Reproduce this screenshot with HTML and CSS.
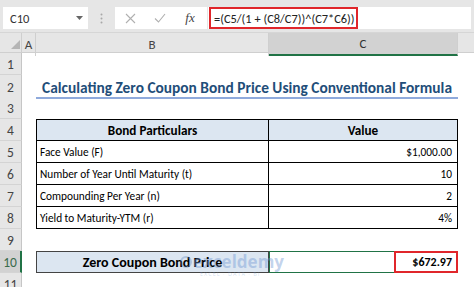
FILE: index.html
```html
<!DOCTYPE html>
<html>
<head>
<meta charset="utf-8">
<link rel="stylesheet" href="styles.css">
</head>
<body>
<div class="app">
  <div class="fbar">
    <div class="namebox"><span>C10</span><svg class="dd" width="7" height="4" viewBox="0 0 7 4"><polygon points="0,0 7,0 3.5,4" fill="#666"/></svg></div>
    <div class="grip"><svg width="3" height="11" viewBox="0 0 3 11"><circle cx="1.5" cy="1.5" r="1" fill="#a8a8a8"/><circle cx="1.5" cy="5.5" r="1" fill="#a8a8a8"/><circle cx="1.5" cy="9.5" r="1" fill="#a8a8a8"/></svg></div>
    <div class="btns">
      <span class="btn"><svg width="11" height="11" viewBox="0 0 11 11"><path d="M1 1 L10 10 M10 1 L1 10" stroke="#b0b0b0" stroke-width="1.1" fill="none"/></svg></span>
      <span class="btn"><svg width="12" height="10" viewBox="0 0 12 10"><path d="M1 5.5 L4.5 9 L11 1" stroke="#b0b0b0" stroke-width="1.1" fill="none"/></svg></span>
      <span class="btn fx">fx</span>
    </div>
    <div class="formula"><div class="fbox">=(C5/(1 + (C8/C7))^(C7*C6))</div></div>
  </div>

  <div class="sheet">
    <div class="row colheads">
      <div class="corner"><svg width="22" height="19" viewBox="0 0 22 19"><polygon points="11,16 20,16 20,7" fill="#b5b5b5"/></svg></div>
      <div class="ch">A</div>
      <div class="ch">B</div>
      <div class="ch sel">C</div>
      <div class="ch last"></div>
    </div>

    <div class="row"><div class="rh">1</div><div></div><div></div><div></div><div></div></div>

    <div class="row"><div class="rh">2</div><div></div><div class="title">Calculating Zero Coupon Bond Price Using Conventional Formula</div><div></div></div>

    <div class="row"><div class="rh">3</div><div></div><div></div><div></div><div></div></div>

    <div class="row"><div class="rh">4</div><div></div><div class="tc tb thead first top">Bond Particulars</div><div class="tc tc2 thead top">Value</div><div></div></div>

    <div class="row"><div class="rh">5</div><div></div><div class="tc tb first">Face Value (F)</div><div class="tc tc2 num">$1,000.00</div><div></div></div>

    <div class="row"><div class="rh">6</div><div></div><div class="tc tb first">Number of Year Until Maturity (t)</div><div class="tc tc2 num">10</div><div></div></div>

    <div class="row"><div class="rh">7</div><div></div><div class="tc tb first">Compounding Per Year (n)</div><div class="tc tc2 num">2</div><div></div></div>

    <div class="row"><div class="rh">8</div><div></div><div class="tc tb first">Yield to Maturity-YTM (r)</div><div class="tc tc2 num">4%</div><div></div></div>

    <div class="row"><div class="rh">9</div><div></div><div></div><div></div><div></div></div>

    <div class="row"><div class="rh selrow">10</div><div></div><div class="result-label">Zero Coupon Bond Price</div><div class="result"><div class="result-box">$672.97</div></div><div></div></div>

    <div class="row"><div class="rh">11</div><div></div><div></div><div></div><div></div></div>

    <div class="watermark">
      <div class="wm-main"><svg class="wm-icon" width="12" height="12" viewBox="0 0 12 12"><circle cx="6" cy="6" r="5" fill="none" stroke="rgba(90,130,190,0.35)" stroke-width="2"/></svg><span>exceldemy</span></div>
      <div class="wm-sub">EXCEL · DATA · BI</div>
    </div>
  </div>
</div>
</body>
</html>
```

FILE: styles.css
```css
html, body {
  margin: 0;
  padding: 0;
  background: #ffffff;
}

.app {
  width: 474px;
  height: 287px;
  overflow: hidden;
  font-family: Carlito, Calibri, Lato, "Noto Sans", sans-serif;
  color: #000;
}

/* ---------- formula bar ---------- */
.fbar {
  height: 33px;
  box-sizing: border-box;
  background: #e6e6e6;
  display: flex;
  align-items: flex-start;
  padding-top: 7px;
  border-bottom: 1px solid #d6d6d6;
}

.namebox {
  margin-left: 3px;
  width: 85px;
  height: 22px;
  box-sizing: border-box;
  background: #fff;
  display: flex;
  align-items: center;
  justify-content: space-between;
  padding: 0 5px 0 7px;
  font-size: 12.5px;
  color: #333;
}

.grip {
  width: 27px;
  height: 22px;
  display: flex;
  align-items: center;
  justify-content: center;
}

.btns {
  width: 92px;
  height: 22px;
  background: #fff;
  display: flex;
  align-items: center;
}

.btn {
  width: 30px;
  display: flex;
  justify-content: center;
  align-items: center;
}

.fx {
  font-family: "Liberation Serif", "DejaVu Serif", serif;
  font-style: italic;
  font-size: 13px;
  color: #444;
}

.formula {
  margin-left: 1px;
  width: 262px;
  height: 22px;
  background: #fff;
  padding-left: 1px;
}

.fbox {
  width: 149px;
  height: 22px;
  box-sizing: border-box;
  border: 2px solid #e0262b;
  display: flex;
  align-items: center;
  padding-left: 3px;
  font-size: 12.4px;
  color: #222;
  white-space: nowrap;
}

/* ---------- sheet ---------- */
.sheet {
  position: relative;
}

.row {
  display: grid;
  grid-template-columns: 22px 14px 233px 189px 1fr;
  height: 22px;
}

.colheads {
  height: 19px;
  background: #e6e6e6;
  border-bottom: 1px solid #cfcfcf;
}

.corner {
  border-right: 1px solid #cfcfcf;
  box-sizing: border-box;
}

.ch {
  font-size: 13px;
  color: #444;
  display: flex;
  align-items: center;
  justify-content: center;
  border-right: 1px solid #cfcfcf;
  box-sizing: border-box;
}

.ch.sel {
  background: #d2d2d2;
  border-bottom: 2px solid #217346;
  color: #333;
}

.ch.last {
  border-right: none;
}

.rh {
  background: #e6e6e6;
  border-right: 1px solid #c6c6c6;
  border-bottom: 1px solid #d4d4d4;
  box-sizing: border-box;
  font-size: 13.5px;
  color: #444;
  display: flex;
  align-items: center;
  justify-content: center;
  padding-top: 2px;
}

.rh.selrow {
  background: #d2d2d2;
  border-right: 2px solid #217346;
  color: #3a6b4c;
}

.title {
  grid-column: 3 / span 2;
  font-weight: bold;
  font-size: 15.4px;
  color: #1f4e79;
  text-align: center;
  border-bottom: 2px solid #8faadc;
  box-sizing: border-box;
  display: flex;
  align-items: center;
  justify-content: center;
  white-space: nowrap;
  padding-top: 3px;
}

/* table cells */
.tc {
  box-sizing: border-box;
  border-bottom: 1px solid #000;
  border-right: 1px solid #000;
  font-size: 11.3px;
  display: flex;
  align-items: center;
  white-space: nowrap;
  padding-top: 1px;
}

.tc.first {
  border-left: 1px solid #000;
  padding-left: 3px;
}

.tc.top {
  border-top: 1px solid #000;
}

.tc.thead {
  background: #dce6f1;
  font-weight: bold;
  justify-content: center;
  padding-left: 0;
  font-size: 13.2px;
}

.tc.num {
  justify-content: flex-end;
  padding-right: 5px;
}

.result-label {
  box-sizing: border-box;
  border: 1px solid #444;
  background: #dce6f1;
  font-weight: bold;
  font-size: 14px;
  display: flex;
  align-items: center;
  justify-content: center;
  white-space: nowrap;
}

.result {
  box-sizing: border-box;
  border: 1px solid #217346;
  display: flex;
  justify-content: flex-end;
}

.result-box {
  width: 64px;
  margin: -1px -1px -1px 0;
  box-sizing: border-box;
  border: 2px solid #e0262b;
  font-weight: bold;
  font-size: 12px;
  display: flex;
  align-items: center;
  justify-content: flex-end;
  padding-right: 4px;
}

/* watermark overlay */
.watermark {
  position: absolute;
  left: 180px;
  top: 219px;
  pointer-events: none;
}

.wm-main {
  display: flex;
  align-items: center;
  gap: 1px;
  font-family: "Open Sans", Lato, sans-serif;
  font-weight: bold;
  font-size: 17px;
  line-height: 19px;
  color: rgba(110, 150, 210, 0.42);
}

.wm-sub {
  font-family: "Open Sans", sans-serif;
  font-size: 5.5px;
  letter-spacing: 1px;
  color: rgba(110, 150, 210, 0.32);
  padding-left: 20px;
  line-height: 7px;
}
```
